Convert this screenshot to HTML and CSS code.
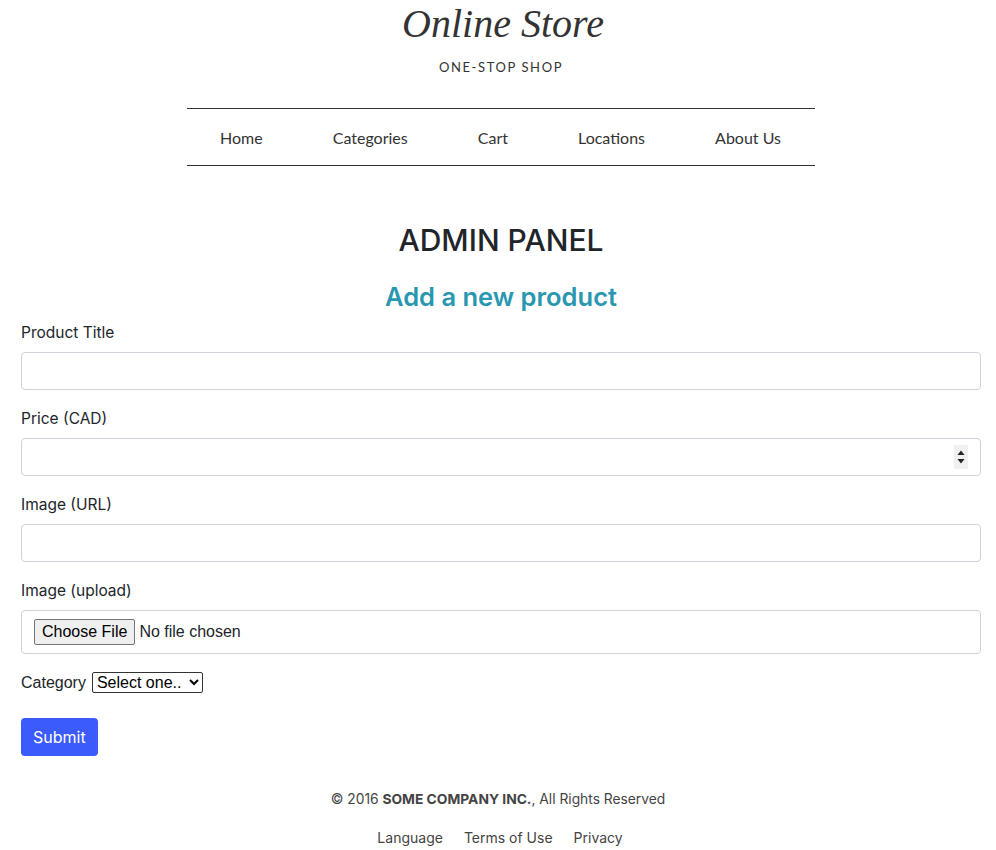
FILE: index.html
```html
<!DOCTYPE html>
<html>
<head>
<meta charset="utf-8">
<link rel="stylesheet" href="styles.css">
</head>
<body>
<header class="site-header">
  <h1 class="logo">Online Store</h1>
  <p class="tagline">ONE-STOP SHOP</p>
  <nav class="main-nav">
    <a href="#">Home</a>
    <a href="#">Categories</a>
    <a href="#">Cart</a>
    <a href="#">Locations</a>
    <a href="#">About Us</a>
  </nav>
</header>
<main class="content">
  <h2 class="page-title">ADMIN PANEL</h2>
  <h3 class="section-title">Add a new product</h3>
  <form class="product-form">
    <div class="field">
      <label>Product Title</label>
      <input type="text" class="control">
    </div>
    <div class="field">
      <label>Price (CAD)</label>
      <div class="number-wrap">
        <input type="number" class="control">
        <span class="spinner">
          <svg width="8" height="20" viewBox="0 0 8 20"><path d="M0.5 8 L4 3.5 L7.5 8 Z" fill="#222"/><path d="M0.5 12 L4 16.5 L7.5 12 Z" fill="#222"/></svg>
        </span>
      </div>
    </div>
    <div class="field">
      <label>Image (URL)</label>
      <input type="text" class="control">
    </div>
    <div class="field">
      <label>Image (upload)</label>
      <input type="file" class="control file-control">
    </div>
    <div class="field-inline">
      <label>Category</label>
      <select class="category-select"><option>Select one..</option></select>
    </div>
    <button type="button" class="submit-btn">Submit</button>
  </form>
</main>
<footer class="site-footer">
  <p class="copyright">© 2016 <strong>SOME COMPANY INC.</strong>, All Rights Reserved</p>
  <div class="footer-links">
    <a href="#">Language</a>
    <a href="#">Terms of Use</a>
    <a href="#">Privacy</a>
  </div>
</footer>
</body>
</html>
```
FILE: styles.css
```css
* { box-sizing: border-box; }
body {
  margin: 0;
  font-family: Inter, "Noto Sans", sans-serif;
  color: #212529;
  background: #fff;
}
.site-header {
  display: flex;
  flex-direction: column;
  align-items: center;
}
.logo {
  margin: 2px 0 0 10px;
  font-family: "Liberation Serif", serif;
  font-style: italic;
  font-weight: 400;
  font-size: 40px;
  line-height: 44px;
  color: #333;
}
.tagline {
  margin: 13px 0 0 6px;
  font-family: Lato, sans-serif;
  font-size: 13px;
  letter-spacing: 1.6px;
  color: #333;
}
.main-nav {
  margin: 33px 0 0 6px;
  width: 628px;
  height: 58px;
  border-top: 1px solid #333;
  border-bottom: 1px solid #333;
  display: flex;
  justify-content: space-between;
  align-items: center;
  padding: 0 34px 0 33px;
}
.main-nav a {
  font-family: Lato, sans-serif;
  font-size: 16px;
  color: #333;
  text-decoration: none;
}
.content {
  padding: 0 15px 0 21px;
}
.page-title {
  margin: 56px 0 0;
  text-align: center;
  font-size: 30px;
  font-weight: 500;
  line-height: 36px;
  color: #212529;
}
.section-title {
  margin: 24px 0 0;
  text-align: center;
  font-size: 25.5px;
  font-weight: 600;
  line-height: 30px;
  color: #2a97b0;
}
.product-form {
  margin-top: 9px;
}
.field label {
  display: block;
  font-size: 15.5px;
  line-height: 24px;
  margin-bottom: 7px;
}
.field {
  margin-bottom: 17px;
}
.control {
  display: block;
  width: 100%;
  height: 38px;
  border: 1px solid #ced4da;
  border-radius: 4px;
  padding: 6px 12px;
  font-size: 16px;
  font-family: inherit;
}
.number-wrap {
  position: relative;
}
.spinner {
  position: absolute;
  right: 13px;
  top: 7px;
  width: 14px;
  height: 24px;
  background: #f0f0f0;
  display: flex;
  align-items: center;
  justify-content: center;
}
.file-control {
  height: 44px;
  padding: 8px 12px;
  font-family: "Liberation Sans", Arial, sans-serif;
}
.file-control::file-selector-button {
  font-family: "Liberation Sans", Arial, sans-serif;
  font-size: 16px;
  padding: 3px 7px;
  margin-right: 4px;
  border: 1px solid #767676;
  border-radius: 2px;
  background: #efefef;
}
.field-inline {
  display: flex;
  align-items: center;
  gap: 6px;
  font-family: "Liberation Sans", Arial, sans-serif;
  font-size: 16px;
  margin-top: 18px;
}
.category-select {
  font-family: "Liberation Sans", Arial, sans-serif;
  font-size: 16px;
  height: 21px;
  width: 111px;
  border: 1px solid #333;
  border-radius: 2px;
  background: #fff;
}
.submit-btn {
  margin-top: 25px;
  height: 38px;
  padding: 0 12px;
  border: none;
  border-radius: 4px;
  background: #3b5bfd;
  color: #fff;
  font-family: inherit;
  font-size: 16px;
}
.site-footer {
  text-align: center;
  margin-top: 33px;
  font-size: 13.8px;
  color: #444;
}
.copyright {
  margin: 0;
  line-height: 20px;
}
.footer-links {
  margin-top: 20px;
  display: flex;
  justify-content: center;
  gap: 21px;
  margin-left: 4px;
}
.footer-links a {
  color: #444;
  text-decoration: none;
  font-size: 14px;
}
```
